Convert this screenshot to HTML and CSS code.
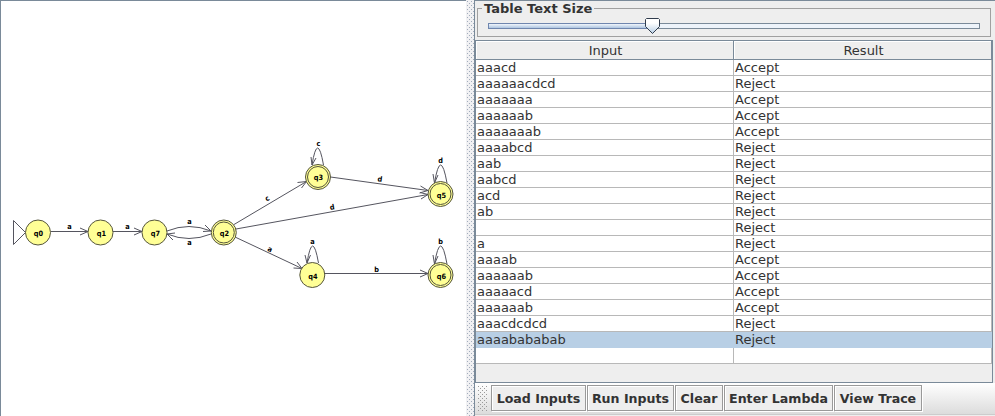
FILE: index.html
```
<!DOCTYPE html>
<html lang="en">
<head>
<meta charset="utf-8">
<title>Multiple Run</title>
<link rel="stylesheet" href="styles.css">
</head>
<body>
<div class="split">
  <main class="canvas">
    <svg class="graph" width="465" height="415" viewBox="1 1 465 415">
      <g class="edges">
        <path d="M13.5 220.5V244.5L25.5 232.5Z"/>
        <path d="M51 231.5H88M80 228L88 231.5L80 235"/>
        <path d="M113 231.5H142M134 228L142 231.5L134 235"/>
        <path d="M167 231Q189 222 211 231M205 225L211 231L203 231.500"/>
        <path d="M211 234Q189 243 167 234M173 240L167 234L175 233"/>
        <path d="M234 224.500L306.500 181.500M297.500 182.500L306.500 181.500L301.500 188"/>
        <path d="M236 229L428 194.500M420 192.500L428 194.500L421 199"/>
        <path d="M235 237L302 268.500M297 262L302 268.500L293.500 268"/>
        <path d="M330.500 177L428 190.500M420.500 186L428 190.500L419.500 193"/>
        <path d="M325 273.500H428M420 270L428 273.500L420 277"/>
        <path d="M323.500 165Q317.500 131 312 165M311 157L312 165L316 158"/>
        <path d="M447 183Q440.500 147 434.500 183M433 174L434.500 183L438 175"/>
        <path d="M318.500 263Q312.500 229 307 263M305 255L307 263L310.500 255"/>
        <path d="M447 264Q440.500 228 434.500 264M433 255L434.500 264L438 256"/>
      </g>
      <g class="nodes">
        <circle cx="38" cy="232.500" r="12.500"/>
        <circle cx="100.500" cy="232.500" r="12.500"/>
        <circle cx="154.500" cy="232.500" r="12.500"/>
        <circle cx="223.800" cy="232.500" r="12.500"/><circle cx="223.800" cy="232.500" r="10.500"/>
        <circle cx="318" cy="177" r="12.500"/><circle cx="318" cy="177" r="10.500"/>
        <circle cx="440.500" cy="194" r="12.500"/><circle cx="440.500" cy="194" r="10.500"/>
        <circle cx="312.300" cy="275" r="12.500"/>
        <circle cx="440.500" cy="275" r="12.500"/><circle cx="440.500" cy="275" r="10.500"/>
      </g>
      <g class="names">
        <text x="38.500" y="236">q0</text><text x="101.500" y="236">q1</text>
        <text x="155.500" y="236">q7</text><text x="224.500" y="236">q2</text>
        <text x="318.500" y="180">q3</text><text x="441.500" y="198">q5</text>
        <text x="313" y="279">q4</text><text x="441.500" y="279">q6</text>
      </g>
      <g class="labels">
        <text x="69.500" y="229">a</text><text x="127.500" y="229">a</text>
        <text x="189.500" y="224">a</text><text x="189.500" y="245">a</text>
        <text x="318.500" y="146">c</text><text x="440.500" y="163">d</text>
        <text x="312.500" y="244">a</text><text x="440.500" y="244">b</text>
        <text x="376.500" y="272">b</text>
        <text transform="translate(268.500 200.500) rotate(-30)">c</text>
        <text transform="translate(332.500 209.500) rotate(-10)">d</text>
        <text transform="translate(379.500 181.500) rotate(8)">d</text>
        <text transform="translate(269 251.500) rotate(25)">a</text>
      </g>
    </svg>
  </main>
  <div class="divider"></div>
  <section class="side">
    <fieldset class="sizer">
      <legend>Table Text Size</legend>
      <svg class="slider" width="494" height="18" viewBox="0 0 494 18">
        <defs>
          <linearGradient id="fill" x2="0" y2="1"><stop offset="0" stop-color="#f8fbff"/><stop offset="1" stop-color="#a5bfdd"/></linearGradient>
          <linearGradient id="knob" x2="0" y2="1"><stop offset="0.300" stop-color="#fff"/><stop offset="1" stop-color="#b8cfe5"/></linearGradient>
        </defs>
        <rect class="track" x="1.500" y="6.500" width="491" height="5"/>
        <rect class="filled" x="1.500" y="6.500" width="163" height="5"/>
        <path class="knob" d="M159.500 1.500H171.500L172.500 2.500V9.500L165.500 16.500L158.500 9.500V2.500Z"/>
      </svg>
    </fieldset>
    <div class="scroll">
      <table>
        <thead><tr><th class="input">Input</th><th>Result</th></tr></thead>
        <tbody>
          <tr><td>aaacd</td><td>Accept</td></tr>
          <tr><td>aaaaaacdcd</td><td>Reject</td></tr>
          <tr><td>aaaaaaa</td><td>Accept</td></tr>
          <tr><td>aaaaaab</td><td>Accept</td></tr>
          <tr><td>aaaaaaab</td><td>Accept</td></tr>
          <tr><td>aaaabcd</td><td>Reject</td></tr>
          <tr><td>aab</td><td>Reject</td></tr>
          <tr><td>aabcd</td><td>Reject</td></tr>
          <tr><td>acd</td><td>Reject</td></tr>
          <tr><td>ab</td><td>Reject</td></tr>
          <tr><td></td><td>Reject</td></tr>
          <tr><td>a</td><td>Reject</td></tr>
          <tr><td>aaaab</td><td>Accept</td></tr>
          <tr><td>aaaaaab</td><td>Accept</td></tr>
          <tr><td>aaaaacd</td><td>Accept</td></tr>
          <tr><td>aaaaaab</td><td>Accept</td></tr>
          <tr><td>aaacdcdcd</td><td>Reject</td></tr>
          <tr class="selected"><td>aaaabababab</td><td>Reject</td></tr>
          <tr><td></td><td></td></tr>
        </tbody>
      </table>
    </div>
    <div class="toolbar">
      <span class="grip"></span>
      <button class="load">Load Inputs</button>
      <button class="run">Run Inputs</button>
      <button class="clear">Clear</button>
      <button class="lambda">Enter Lambda</button>
      <button class="trace">View Trace</button>
    </div>
  </section>
</div>
</body>
</html>
```
FILE: styles.css
```
* { box-sizing: border-box; }
body {
  margin: 0;
  width: 995px;
  height: 416px;
  overflow: hidden;
  background: #eee;
  color: #333;
  font: 13px "DejaVu Sans", sans-serif;
}
.split { display: flex; height: 416px; }
.canvas {
  width: 466px;
  background: #fff;
  border-top: 1px solid #7a8a99;
  border-left: 1px solid #7a8a99;
}
.graph { display: block; }
.edges path { fill: none; stroke: #55555f; stroke-width: 1; }
.nodes circle { fill: #ffff96; stroke: #55553c; stroke-width: 1; }
.names, .labels {
  fill: #000;
  font-family: "DejaVu Sans Condensed", "DejaVu Sans", sans-serif;
  font-stretch: condensed;
  font-weight: bold;
  text-anchor: middle;
}
.names { font-size: 7.3px; }
.labels { font-size: 7.3px; }
.divider {
  width: 8px;
  background-color: #f1f1f3;
  background-image:
    conic-gradient(from 270deg at 1px 1px, #a3adbd 90deg, transparent 0),
    conic-gradient(from 270deg at 1px 1px, #a3adbd 90deg, transparent 0);
  background-size: 4px 4px;
  background-position: 1px 1px, 3px 3px;
}
.side {
  width: 521px;
  display: flex;
  flex-direction: column;
  border-top: 1px solid #7a8a99;
  border-left: 1px solid #7a8a99;
}
.sizer {
  height: 36px;
  margin: 0 4px 3px 2px;
  padding: 1px 0 0 9px;
  border: 1px solid #a0a0a0;
  min-width: 0;
}
.sizer legend {
  height: 14px;
  margin-left: -5px;
  padding: 0 2px;
  font-weight: bold;
  line-height: 15px;
}
.slider { display: block; margin-top: 1px; }
.track { fill: #edf3fa; stroke: #7a8a99; }
.filled { fill: url(#fill); stroke: #6f86ae; }
.knob { fill: url(#knob); stroke: #303c4d; }
.scroll {
  height: 343px;
  width: 518px;
  border: 1px solid #7a8a99;
}
table {
  width: 516px;
  border-collapse: separate;
  border-spacing: 0;
  table-layout: fixed;
}
th {
  height: 19px;
  padding: 1px 0 0 2px;
  border-right: 1px solid #7a8a99;
  border-bottom: 1px solid #7a8a99;
  box-shadow: inset 1px 1px #fff;
  font-weight: normal;
  line-height: 17px;
}
th.input { width: 258px; }
td {
  height: 16px;
  padding: 0 0 0 1px;
  border-right: 1px solid #b8b8b8;
  border-bottom: 1px solid #b8b8b8;
  background: #fff;
  line-height: 15px;
  white-space: nowrap;
}
.selected td { background: #b8cfe5; border-color: #b8cfe5; }
.toolbar {
  display: flex;
  gap: 1px;
  height: 32px;
  padding: 2px 0 0 2px;
  border-bottom: 1px solid #ccc;
  background: linear-gradient(#fff, #dcdcdc);
}
.grip {
  width: 10px;
  height: 26px;
  margin-right: 3px;
  background-image:
    conic-gradient(from 270deg at 1px 1px, #999 90deg, transparent 0),
    conic-gradient(from 270deg at 1px 1px, #999 90deg, transparent 0);
  background-size: 4px 4px;
  background-position: 1px 1px, 3px 3px;
}
button {
  height: 26px;
  padding: 0;
  border: 1px solid #999;
  box-shadow: inset 1px 1px #fff, 1px 1px #fff;
  background: #eee;
  color: #333;
  font: bold 12.6px "DejaVu Sans", sans-serif;
  white-space: nowrap;
}
.load { width: 95px; }
.run { width: 87px; }
.clear { width: 48px; }
.lambda { width: 109px; }
.trace { width: 88px; }
```
